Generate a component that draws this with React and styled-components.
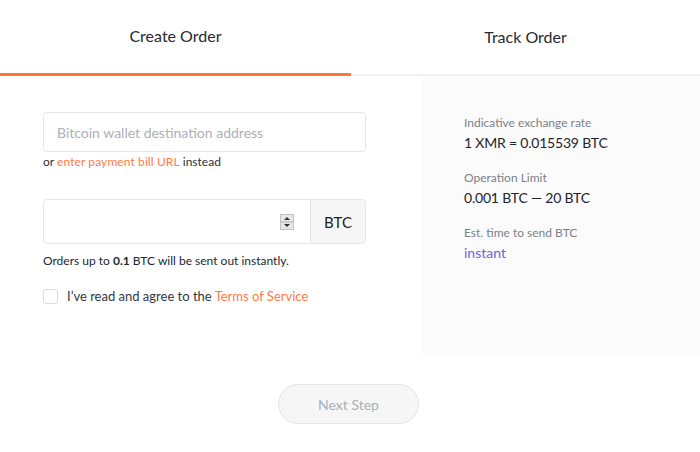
import React, { useState } from 'react';
import styled, { createGlobalStyle } from 'styled-components';

const GlobalStyle = createGlobalStyle`
  html, body {
    margin: 0;
    padding: 0;
    background: #ffffff;
    font-family: Lato, 'Open Sans', sans-serif;
    color: #222831;
  }
  * { box-sizing: border-box; }
`;

const App = () => {
  const [agreed, setAgreed] = useState(false);

  return (
    <Page>
      <GlobalStyle />
      <Tabs>
        <Tab active>Create Order</Tab>
        <Tab>Track Order</Tab>
      </Tabs>

      <Body>
        <Form>
          <TextInput placeholder="Bitcoin wallet destination address" />
          <Hint>
            or <LinkHint href="#">enter payment bill URL</LinkHint> instead
          </Hint>

          <AmountGroup>
            <AmountInput>
              <Spinner>
                <svg width="14" height="16" viewBox="0 0 14 16">
                  <rect x="0.5" y="0.5" width="13" height="15" fill="#e6e6e6" stroke="#c4c4c4" />
                  <line x1="1" y1="8" x2="13" y2="8" stroke="#b5b5b5" />
                  <path d="M4 6 L7 3 L10 6 Z" fill="#333" />
                  <path d="M4 10 L7 13 L10 10 Z" fill="#333" />
                </svg>
              </Spinner>
            </AmountInput>
            <Addon>BTC</Addon>
          </AmountGroup>
          <Note>
            Orders up to <b>0.1</b> BTC will be sent out instantly.
          </Note>

          <CheckRow onClick={() => setAgreed(!agreed)}>
            <Box checked={agreed} />
            <span>
              I’ve read and agree to the <Orange>Terms of Service</Orange>
            </span>
          </CheckRow>
        </Form>

        <Side>
          <InfoItem>
            <InfoLabel>Indicative exchange rate</InfoLabel>
            <InfoValue>1 XMR = 0.015539 BTC</InfoValue>
          </InfoItem>
          <InfoItem>
            <InfoLabel>Operation Limit</InfoLabel>
            <InfoValue>0.001 BTC — 20 BTC</InfoValue>
          </InfoItem>
          <InfoItem>
            <InfoLabel>Est. time to send BTC</InfoLabel>
            <InfoValue accent>instant</InfoValue>
          </InfoItem>
        </Side>
      </Body>

      <Footer>
        <NextButton disabled>Next Step</NextButton>
      </Footer>
    </Page>
  );
};

// LAYOUT
const Page = styled.div`
  width: 700px;
  display: flex;
  flex-direction: column;
`;

const Tabs = styled.div`
  display: grid;
  grid-template-columns: 351px 1fr;
`;

const Tab = styled.div((props) => ({
  height: 76,
  display: 'flex',
  alignItems: 'center',
  justifyContent: 'center',
  paddingBottom: 3,
  fontSize: 16,
  color: '#252a33',
  borderBottom: props.active ? '3px solid #ff7634' : '2px solid #f1f1f1',
  marginBottom: props.active ? 0 : 1,
  paddingTop: props.active ? 0 : 1,
}));

const Body = styled.div`
  display: grid;
  grid-template-columns: 422px 1fr;
`;

const Form = styled.div`
  padding: 35px 56px 0 43px;
  display: flex;
  flex-direction: column;
`;

// INPUTS
const TextInput = styled.input`
  height: 40px;
  width: 100%;
  border: 1px solid #e6e6e6;
  border-radius: 4px;
  padding: 0 13px;
  font-family: Lato, sans-serif;
  font-size: 14px;
  color: #222;
  outline: none;
  &::placeholder {
    color: #abb0b8;
  }
`;

const Hint = styled.div`
  margin-top: 2px;
  font-size: 12px;
  line-height: 15px;
  color: #2b2f38;
`;

const LinkHint = styled.a`
  color: #ff7a45;
  text-decoration: none;
  letter-spacing: 0.1px;
`;

const AmountGroup = styled.div`
  display: flex;
  height: 45px;
  margin-top: 30px;
  border: 1px solid #e6e6e6;
  border-radius: 4px;
  overflow: hidden;
`;

const AmountInput = styled.div`
  flex: 1;
  display: flex;
  align-items: center;
  justify-content: flex-end;
  padding-right: 16px;
`;

const Spinner = styled.span`
  display: flex;
  svg { display: block; }
`;

const Addon = styled.div`
  width: 55px;
  display: flex;
  align-items: center;
  justify-content: center;
  background: #f6f6f6;
  border-left: 1px solid #e6e6e6;
  font-size: 15px;
  color: #222;
`;

const Note = styled.div`
  margin-top: 9px;
  font-size: 12px;
  line-height: 15px;
  color: #222831;
  b { font-weight: 700; }
`;

const CheckRow = styled.label`
  display: flex;
  align-items: center;
  gap: 9px;
  margin-top: 20px;
  font-size: 13px;
  line-height: 17px;
  color: #33373f;
  cursor: pointer;
`;

const Box = styled.span((props) => ({
  width: 15,
  height: 15,
  border: '1px solid #dcdcdc',
  borderRadius: 3,
  background: props.checked ? '#ff7634' : '#fff',
}));

const Orange = styled.span`
  color: #ff7a45;
`;

// SIDE PANEL
const Side = styled.div`
  background: #fbfbfb;
  height: 279px;
  padding: 38px 20px 0 42px;
  display: flex;
  flex-direction: column;
  gap: 19px;
`;

const InfoItem = styled.div`
  display: flex;
  flex-direction: column;
  gap: 4px;
`;

const InfoLabel = styled.div`
  font-size: 12px;
  color: #7b7f88;
`;

const InfoValue = styled.div((props) => ({
  fontSize: 14,
  letterSpacing: props.accent ? 0 : -0.2,
  color: props.accent ? '#6d62e4' : '#1f232b',
}));

// FOOTER
const Footer = styled.div`
  display: flex;
  justify-content: center;
  padding: 28px 3px 0 0;
`;

const NextButton = styled.button`
  width: 141px;
  height: 40px;
  border-radius: 20px;
  border: 1px solid #e3e3e3;
  background: #f6f6f6;
  color: #a9b0ba;
  font-family: Lato, sans-serif;
  font-size: 14px;
`;

export default App;
